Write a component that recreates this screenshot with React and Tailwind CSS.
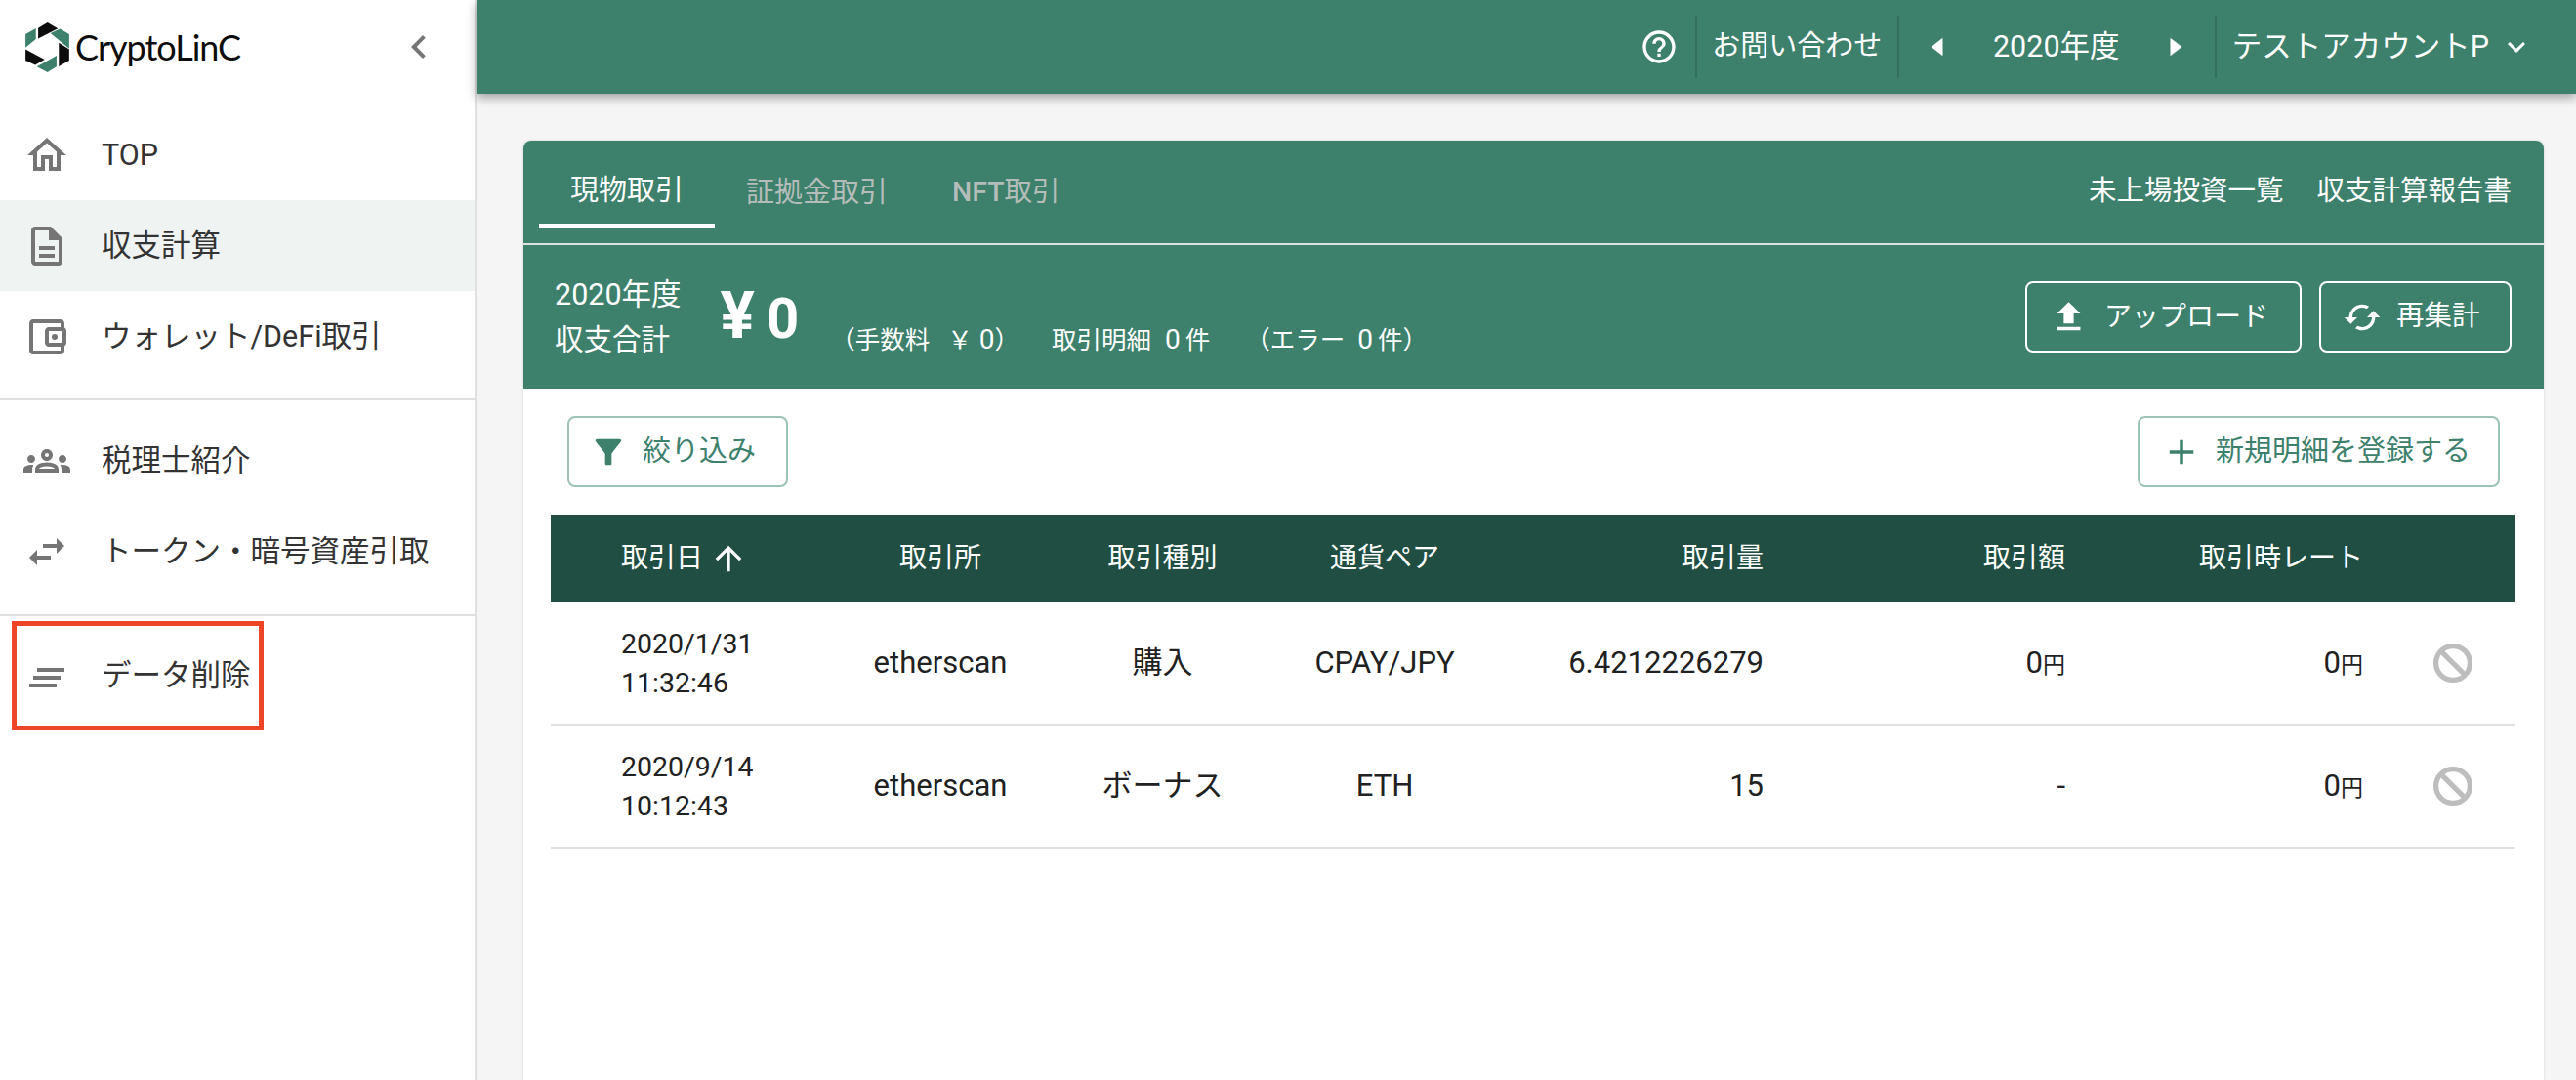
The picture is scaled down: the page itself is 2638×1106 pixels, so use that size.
const paths = {
  home: "M12 5.69l5 4.5V18h-2v-6H9v6H7v-7.81l5-4.5M12 3L2 12h3v8h6v-6h2v6h6v-8h3L12 3z",
  file: "M6 2h8l6 6v12c0 1.1-.9 2-2 2H6c-1.1 0-2-.9-2-2V4c0-1.1.9-2 2-2zm0 2v16h12V9h-5V4H6zm2 8h8v2H8v-2zm0 4h8v2H8v-2z",
  wallet:
    "M21 7.28V5c0-1.1-.9-2-2-2H5c-1.11 0-2 .9-2 2v14c0 1.1.89 2 2 2h14c1.1 0 2-.9 2-2v-2.28c.59-.35 1-.98 1-1.72V9c0-.74-.41-1.37-1-1.72zM20 9v6h-7V9h7zM5 19V5h14v2h-6c-1.1 0-2 .9-2 2v6c0 1.1.9 2 2 2h6v2H5zM16 13.5a1.5 1.5 0 1 0 0-3 1.5 1.5 0 0 0 0 3z",
  groups:
    "M4 13c1.1 0 2-.9 2-2s-.9-2-2-2-2 .9-2 2 .9 2 2 2zm1.13 1.1c-.37-.06-.74-.1-1.13-.1-.99 0-1.93.21-2.78.58C.48 14.9 0 15.62 0 16.43V18h4.5v-1.61c0-.83.23-1.61.63-2.29zM20 13c1.1 0 2-.9 2-2s-.9-2-2-2-2 .9-2 2 .9 2 2 2zm4 3.43c0-.81-.48-1.53-1.22-1.85-.85-.37-1.79-.58-2.78-.58-.39 0-.76.04-1.13.1.4.68.63 1.46.63 2.29V18H24v-1.57zm-7.76-2.78c-1.17-.52-2.61-.9-4.24-.9-1.63 0-3.07.39-4.24.9C6.68 14.13 6 15.21 6 16.39V18h12v-1.61c0-1.18-.68-2.26-1.76-2.74zM8.07 16c.09-.23.13-.39.91-.69.97-.38 1.99-.56 3.02-.56s2.05.18 3.02.56c.77.3.81.46.91.69H8.07zM12 8c.55 0 1 .45 1 1s-.45 1-1 1-1-.45-1-1 .45-1 1-1m0-2c-1.66 0-3 1.34-3 3s1.34 3 3 3 3-1.34 3-3-1.34-3-3-3z",
  swap: "M6.99 11L3 15l3.99 4v-3H14v-2H6.99v-3zM21 9l-4-4v3h-7v2h7v3l4-4z",
  lines: "M7 8h14v2H7zM5 12h14v2H5zM3 16h14v2H3z",
  chevronLeft: "M15.41 7.41L14 6l-6 6 6 6 1.41-1.41L10.83 12z",
  help: "M11 18h2v-2h-2v2zm1-16C6.48 2 2 6.48 2 12s4.48 10 10 10 10-4.48 10-10S17.52 2 12 2zm0 18c-4.41 0-8-3.59-8-8s3.59-8 8-8 8 3.59 8 8-3.59 8-8 8zm0-14c-2.21 0-4 1.79-4 4h2c0-1.1.9-2 2-2s2 .9 2 2c0 2-3 1.75-3 5h2c0-2.25 3-2.5 3-5 0-2.21-1.79-4-4-4z",
  arrowLeft: "M15 7l-6.5 5 6.5 5V7z",
  arrowRight: "M9 17l6.5-5L9 7v10z",
  expand: "M16.59 8.59L12 13.17 7.41 8.59 6 10l6 6 6-6z",
  upload: "M5 20h14v-2H5v2zm0-10h4v6h6v-6h4l-7-7-7 7z",
  cached:
    "M19 8l-4 4h3c0 3.31-2.69 6-6 6-1.01 0-1.97-.25-2.8-.7l-1.46 1.46C8.97 19.54 10.43 20 12 20c4.42 0 8-3.58 8-8h3l-4-4zM6 12c0-3.31 2.69-6 6-6 1.01 0 1.97.25 2.8.7l1.46-1.46C15.03 4.46 13.57 4 12 4c-4.42 0-8 3.58-8 8H1l4 4 4-4H6z",
  filter:
    "M4.25 5.61C6.27 8.2 10 13 10 13v6c0 .55.45 1 1 1h2c.55 0 1-.45 1-1v-6s3.72-4.8 5.74-7.39c.51-.66.04-1.61-.79-1.61H5.04c-.83 0-1.3.95-.79 1.61z",
  add: "M19 13h-6v6h-2v-6H5v-2h6V5h2v6h6v2z",
  arrowUp: "M4 12l1.41 1.41L11 7.83V20h2V7.83l5.58 5.59L20 12l-8-8-8 8z",
};

const Icon = ({ name, className }) => (
  <svg viewBox="0 0 24 24" fill="currentColor" className={className}>
    <path d={paths[name]} />
  </svg>
);

const BanIcon = () => (
  <svg viewBox="0 0 24 24" fill="none" stroke="currentColor" strokeWidth="2.6" className="size-12 text-[#bdbdbd]">
    <circle cx="12" cy="12" r="8.7" />
    <path d="M5.9 5.9l12.2 12.2" />
  </svg>
);

const Logo = () => (
  <svg viewBox="78 67 135 154" className="w-[45px] h-[51px] shrink-0">
    <polygon fill="#0d0d0d" points="146,67 178,86 117,117 117,84" />
    <polygon fill="#3d806c" points="155,100 185,87 213,103 213,148" />
    <polygon fill="#0d0d0d" points="181,130 213,150 213,185 181,203" />
    <polygon fill="#3d806c" points="113,204 174,170 174,204 146,221" />
    <polygon fill="#0d0d0d" points="78,150 137,182 108,198 78,185" />
    <polygon fill="#3d806c" points="78,103 110,85 110,118 78,145" />
  </svg>
);

const NavItem = ({ icon, label, active, children }) => (
  <div className={`relative h-[93px] flex items-center pl-[24px] ${active ? "bg-[#eff3f2]" : ""}`}>
    <Icon name={icon} className="size-12 text-[#757575] shrink-0" />
    <span className="ml-[32px] text-[30.5px] text-[#333333] whitespace-nowrap">{label}</span>
    {children}
  </div>
);

const Sidebar = () => (
  <aside className="w-[488px] shrink-0 bg-white border-r-2 border-[#e0e0e0] h-full">
    <div className="h-[112px] pb-[16px] flex items-center pl-[26px] pr-[33px]">
      <Logo />
      <span className="ml-[6px] text-[36px] font-[Lato,sans-serif] text-[#0d0d0d] leading-none tracking-[-1px]">
        CryptoLinC
      </span>
      <Icon name="chevronLeft" className="size-12 text-[#757575] ml-auto" />
    </div>
    <NavItem icon="home" label="TOP" />
    <NavItem icon="file" label="収支計算" active />
    <NavItem icon="wallet" label="ウォレット/DeFi取引" />
    <div className="h-[2px] bg-[#e0e0e0] mt-[17px] mb-[15px]" />
    <NavItem icon="groups" label="税理士紹介" />
    <NavItem icon="swap" label="トークン・暗号資産引取" />
    <div className="h-[2px] bg-[#e0e0e0] mt-[18px] mb-[14px]" />
    <NavItem icon="lines" label="データ削除">
      <div className="absolute left-[12px] top-[-9px] w-[258px] h-[112px] border-[5px] border-[#ee4528]" />
    </NavItem>
  </aside>
);

const Sep = () => <div className="w-[2px] h-[64px] bg-[#35705f] shrink-0" />;

const Header = () => (
  <header className="relative z-10 h-[96px] bg-[#3d806c] shadow-[0_4px_10px_rgba(0,0,0,0.35)] flex items-center justify-end pr-[43px] text-white text-[30.5px] whitespace-nowrap">
    <Icon name="help" className="size-10 mr-[17px]" />
    <Sep />
    <span className="w-[205px] text-center text-[29px]">お問い合わせ</span>
    <Sep />
    <div className="w-[323px] flex items-center justify-between pl-[17px] pr-[18px]">
      <Icon name="arrowLeft" className="size-11" />
      <span>2020年度</span>
      <Icon name="arrowRight" className="size-11" />
    </div>
    <Sep />
    <span className="ml-[16px]">テストアカウントP</span>
    <Icon name="expand" className="size-9 ml-[10px]" />
  </header>
);

const OutlineButton = ({ icon, iconClass, label, className }) => (
  <button className={`h-[73px] rounded-lg flex items-center ${className}`}>
    <Icon name={icon} className={iconClass} />
    <span>{label}</span>
  </button>
);

const CardHead = () => (
  <div className="bg-[#3d806c] text-white text-[28.5px] rounded-t-lg">
    <div className="h-[107px] border-b-2 border-[#e0e0e0] flex items-start justify-between pl-[16px] pr-[33px] whitespace-nowrap">
      <div className="flex h-[105px] text-[29px]">
        <div className="w-[180px] h-[89px] border-b-4 border-white flex items-center justify-center pt-[18px]">現物取引</div>
        <div className="ml-[32px] h-[89px] flex items-center pt-[18px] text-[#b4bdb9]">証拠金取引</div>
        <div className="ml-[66px] h-[89px] flex items-center pt-[18px] text-[28.5px] text-[#b4bdb9]">
          <span className="font-medium">NFT</span>取引
        </div>
      </div>
      <div className="flex gap-[34px] h-[105px] items-center">
        <span>未上場投資一覧</span>
        <span>収支計算報告書</span>
      </div>
    </div>
    <div className="h-[147px] flex items-center pl-[32px] pr-[33px] whitespace-nowrap">
      <div className="leading-[47px]">
        <div className="text-[30.5px]">2020年度</div>
        <div className="text-[29.5px]">収支合計</div>
      </div>
      <div className="ml-[40px] flex items-baseline font-bold leading-none mb-[2px]">
        <span className="text-[66px]">¥</span>
        <span className="ml-[12px] text-[58px]">0</span>
      </div>
      <div className="ml-[32px] mt-[47px] text-[25.5px] flex items-baseline">
        <span>（手数料</span>
        <span className="ml-[18px]">￥</span>
        <span className="ml-[7px] text-[28px]">0</span>
        <span>）</span>
        <span className="ml-[33px]">取引明細</span>
        <span className="ml-[14px] text-[28px]">0</span>
        <span className="ml-[5px]">件</span>
        <span className="ml-[36px]">（エラー</span>
        <span className="ml-[13px] text-[28px]">0</span>
        <span className="ml-[5px]">件）</span>
      </div>
      <div className="ml-auto flex gap-[18px]">
        <OutlineButton
          icon="upload"
          iconClass="w-[41px] h-[41px] mr-[16px]"
          label="アップロード"
          className="w-[283px] border-2 border-white pl-[22px] text-[28px]"
        />
        <OutlineButton
          icon="cached"
          iconClass="size-10 mr-[15px]"
          label="再集計"
          className="w-[197px] border-2 border-white pl-[22px] text-[28.5px]"
        />
      </div>
    </div>
  </div>
);

const rowGrid = "grid grid-cols-[286px_226px_229px_226px_275px_309px_305px_156px] items-center";

const Yen = ({ value }) => (
  <>
    {value}
    <span className="text-[23px]">円</span>
  </>
);

const rows = [
  { date: "2020/1/31", time: "11:32:46", type: "購入", pair: "CPAY/JPY", qty: "6.4212226279", amount: <Yen value="0" /> },
  { date: "2020/9/14", time: "10:12:43", type: "ボーナス", pair: "ETH", qty: "15", amount: "-" },
];

const TradeTable = () => (
  <div className="mx-[28px] mt-[28px] w-[2012px] text-[28px]">
    <div className={`${rowGrid} h-[90px] bg-[#214e43] text-white`}>
      <div className="pl-[72px] flex items-center">
        取引日
        <Icon name="arrowUp" className="size-10 ml-[6px]" />
      </div>
      <div className="text-center">取引所</div>
      <div className="text-center">取引種別</div>
      <div className="text-center">通貨ペア</div>
      <div className="text-right">取引量</div>
      <div className="text-right">取引額</div>
      <div className="text-right">取引時レート</div>
      <div />
    </div>
    {rows.map((row) => (
      <div key={row.date} className={`${rowGrid} h-[126px] border-b-2 border-[#e0e0e0] text-[#212121] text-[31px]`}>
        <div className="pl-[72px] pt-[2px] leading-[40px] text-[28.5px]">
          <div>{row.date}</div>
          <div>{row.time}</div>
        </div>
        <div className="text-center">etherscan</div>
        <div className="text-center">{row.type}</div>
        <div className="text-center">{row.pair}</div>
        <div className="text-right">{row.qty}</div>
        <div className="text-right">{row.amount}</div>
        <div className="text-right">
          <Yen value="0" />
        </div>
        <div className="pl-[68px]">
          <BanIcon />
        </div>
      </div>
    ))}
  </div>
);

const App = () => {
  return (
    <div className="w-[2638px] h-[1106px] overflow-hidden flex bg-[#f5f5f5] font-[Roboto,'Noto_Sans_CJK_JP',sans-serif]">
      <Sidebar />
      <main className="flex-1 min-w-0 flex flex-col">
        <Header />
        <div className="flex-1 pt-[48px] pl-[48px] pr-[33px]">
          <div className="h-full bg-white rounded-t-lg shadow-[0_0_3px_rgba(0,0,0,0.15)]">
            <CardHead />
            <div className="flex justify-between pt-[28px] px-[45px] text-[#3d806c] text-[29px]">
              <OutlineButton
                icon="filter"
                iconClass="size-10 mr-[15px]"
                label="絞り込み"
                className="w-[226px] border-2 border-[#9cc3b6] pl-[20px]"
              />
              <OutlineButton
                icon="add"
                iconClass="w-[42px] h-[42px] mr-[14px]"
                label="新規明細を登録する"
                className="w-[371px] border-2 border-[#9cc3b6] pl-[22px]"
              />
            </div>
            <TradeTable />
          </div>
        </div>
      </main>
    </div>
  );
};

export default App;
